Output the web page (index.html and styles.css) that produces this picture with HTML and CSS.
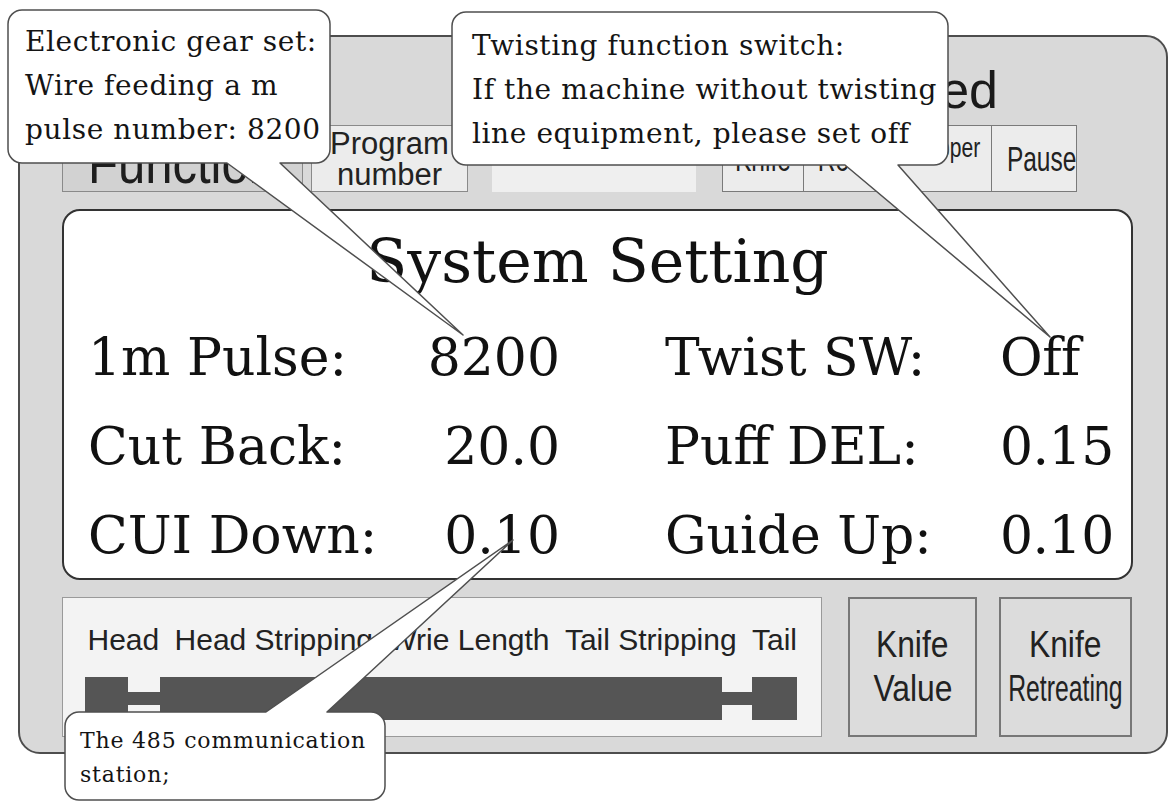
FILE: index.html
```html
<!DOCTYPE html>
<html lang="en">
<head>
<meta charset="utf-8">
<title>System Setting</title>
<link rel="stylesheet" href="styles.css">
</head>
<body>
<div class="stage">
  <div class="device">
    <div class="title-row"><span class="title">Advanced</span></div>
    <div class="toolbar">
      <div class="tb-func"><span class="func-text">Function</span></div>
      <div class="tb-prog"><span>Program</span><span>number</span></div>
      <div class="tb-blank"></div>
      <div class="tb-group">
        <div class="tb-btn"><span class="sq">Knife</span></div>
        <div class="tb-btn"><span class="sq">Reset</span></div>
        <div class="tb-btn tb-btn-top"><span class="sq sq-small">Stripper</span></div>
        <div class="tb-btn"><span class="sq">Pause</span></div>
      </div>
    </div>
    <div class="screen">
      <h1 class="screen-title">System Setting</h1>
      <div class="params">
        <span class="lbl">1m Pulse:</span><span class="val">8200</span><span class="lbl2">Twist SW:</span><span class="val2">Off</span>
        <span class="lbl">Cut Back:</span><span class="val">20.0</span><span class="lbl2">Puff DEL:</span><span class="val2">0.15</span>
        <span class="lbl">CUI Down:</span><span class="val">0.10</span><span class="lbl2">Guide Up:</span><span class="val2">0.10</span>
      </div>
    </div>
    <div class="bottom">
      <div class="wire">
        <div class="wire-labels"><span>Head</span><span>Head Stripping</span><span>Wrie Length</span><span>Tail Stripping</span><span>Tail</span></div>
        <div class="wire-bar">
          <div class="seg-end"></div>
          <div class="seg-neck"></div>
          <div class="seg-core"></div>
          <div class="seg-neck seg-neck-tail"></div>
          <div class="seg-end seg-end-tail"></div>
        </div>
      </div>
      <div class="knife"><span class="kl">Knife</span><span class="kl">Value</span></div>
      <div class="knife knife-ret"><span class="kl">Knife</span><span class="kl kl-tight">Retreating</span></div>
    </div>
  </div>

  <svg class="callout-shapes" width="1176" height="804" viewBox="0 0 1176 804" aria-hidden="true">
    <path d="M22,10 H316 A14,14 0 0 1 330,24 V149 A14,14 0 0 1 316,163 H280 L463,335 L227,163 H22 A14,14 0 0 1 8,149 V24 A14,14 0 0 1 22,10 Z"/>
    <path d="M466,12 H934 A14,14 0 0 1 948,26 V151 A14,14 0 0 1 934,165 H898 L1050,337 L845,165 H466 A14,14 0 0 1 452,151 V26 A14,14 0 0 1 466,12 Z"/>
    <path d="M79,712 H266 L513,540 L327,712 H371 A14,14 0 0 1 385,726 V786 A14,14 0 0 1 371,800 H79 A14,14 0 0 1 65,786 V726 A14,14 0 0 1 79,712 Z"/>
  </svg>
  <div class="callout c1">Electronic gear set:<br>Wire feeding a m<br>pulse number: 8200</div>
  <div class="callout c2">Twisting function switch:<br>If the machine without twisting<br>line equipment, please set off</div>
  <div class="callout c3">The 485 communication<br>station;</div>
</div>
</body>
</html>
```
FILE: styles.css
```css
body {
  margin: 0;
  background: #ffffff;
}

.stage {
  position: relative;
  width: 1176px;
  height: 804px;
  overflow: hidden;
  box-sizing: border-box;
  padding: 35px 0 0 18px;
  background: #ffffff;
}

.device {
  width: 1150px;
  height: 719px;
  box-sizing: border-box;
  border: 2px solid #4d4d4d;
  border-radius: 22px;
  background: #d9d9d9;
  padding: 0 33px 0 42px;
  display: flex;
  flex-direction: column;
}

/* title row */
.title-row {
  height: 88px;
  flex: none;
  box-sizing: border-box;
  padding: 18px 135px 0 0;
  display: flex;
  justify-content: flex-end;
  font: 52px/70px "Liberation Sans", Arial, sans-serif;
  color: #1a1a1a;
}

/* toolbar row */
.toolbar {
  height: 67px;
  flex: none;
  display: flex;
}

.tb-func {
  width: 241px;
  box-sizing: border-box;
  border: 1.5px solid #8a8a8a;
  background: #d2d2d2;
  overflow: hidden;
  padding-left: 25px;
  font: 57px/74px "Liberation Sans", Arial, sans-serif;
  white-space: nowrap;
  color: #1e1e1e;
}

.func-text {
  display: inline-block;
  transform: scaleX(0.86);
  transform-origin: left center;
}

.tb-prog {
  margin-left: 8px;
  width: 157px;
  box-sizing: border-box;
  border: 1.5px solid #8a8a8a;
  background: #ececec;
  display: flex;
  flex-direction: column;
  justify-content: center;
  align-items: center;
  font: 31px/31px "Liberation Sans", Arial, sans-serif;
  color: #222;
}

.tb-blank {
  margin-left: 24px;
  width: 204px;
  background: #efefef;
}

.tb-group {
  margin-left: 26px;
  width: 355px;
  box-sizing: border-box;
  border: 1.5px solid #7a7a7a;
  background: #ececec;
  display: flex;
}

.tb-btn {
  flex: 1;
  display: flex;
  align-items: center;
  justify-content: center;
  border-left: 1.5px solid #7a7a7a;
  font: 35px/35px "Liberation Sans", Arial, sans-serif;
  color: #222;
  white-space: nowrap;
}

.tb-btn:first-child {
  border-left: 0;
}

.tb-btn-top {
  align-items: flex-start;
  padding-top: 9px;
}

.sq {
  display: inline-block;
  transform: scaleX(0.7);
}

.sq-small {
  font-size: 27px;
  line-height: 27px;
  transform: scaleX(0.78);
}

/* main screen */
.screen {
  margin-top: 17px;
  height: 371px;
  flex: none;
  box-sizing: border-box;
  border: 2px solid #333;
  border-radius: 18px;
  background: #ffffff;
  padding-top: 15px;
  color: #111;
}

.screen-title {
  margin: 0;
  font: normal 60px/70px "DejaVu Serif", "Liberation Serif", serif;
  text-align: center;
}

.params {
  margin-top: 16.5px;
  padding-left: 24px;
  display: grid;
  grid-template-columns: 312px 160px 440px 1fr;
  grid-auto-rows: 89px;
  font: 52px/89px "DejaVu Serif", "Liberation Serif", serif;
  white-space: nowrap;
}

.val {
  text-align: right;
}

.lbl2 {
  padding-left: 105px;
}

.val2 {
  letter-spacing: -0.5px;
}

/* bottom row */
.bottom {
  margin-top: 17px;
  height: 140px;
  flex: none;
  display: flex;
}

.wire {
  width: 760px;
  box-sizing: border-box;
  border: 1.5px solid #9a9a9a;
  background: #f3f3f3;
  padding: 24.5px 24px 0 21.5px;
}

.wire-labels {
  margin-left: 3px;
  display: flex;
  justify-content: space-between;
  font: 30px/34px "Liberation Sans", Arial, sans-serif;
  color: #222;
  white-space: nowrap;
}

.wire-bar {
  margin-top: 20px;
  height: 43px;
  display: flex;
  align-items: center;
}

.seg-end {
  width: 43px;
  height: 43px;
  background: #555;
}

.seg-end-tail {
  width: 45px;
}

.seg-neck {
  width: 32px;
  height: 13px;
  background: #555;
}

.seg-neck-tail {
  width: 30px;
}

.seg-core {
  width: 562px;
  height: 43px;
  background: #555;
}

.knife {
  margin-left: 26px;
  width: 129px;
  box-sizing: border-box;
  border: 2px solid #777;
  background: #dcdcdc;
  display: flex;
  flex-direction: column;
  align-items: center;
  justify-content: center;
  font: 37px/44px "Liberation Sans", Arial, sans-serif;
  color: #222;
  white-space: nowrap;
}

.knife-ret {
  margin-left: 22px;
  width: 133px;
}

.kl {
  display: inline-block;
  transform: scaleX(0.86);
}

.kl-tight {
  transform: scaleX(0.67);
}

/* callouts */
.callout-shapes {
  position: absolute;
  left: 0;
  top: 0;
  fill: #ffffff;
  stroke: #4f4f4f;
  stroke-width: 1.5;
  stroke-linejoin: round;
}

.callout {
  position: absolute;
  font-family: "DejaVu Serif", "Liberation Serif", serif;
  color: #141414;
  white-space: nowrap;
}

.c1 {
  left: 8px;
  top: 10px;
  padding: 10px 0 0 17px;
  font-size: 28px;
  line-height: 44px;
  letter-spacing: 0.6px;
}

.c2 {
  left: 452px;
  top: 12px;
  padding: 12px 0 0 20px;
  font-size: 28px;
  line-height: 44px;
  letter-spacing: 0.6px;
}

.c3 {
  left: 65px;
  top: 712px;
  padding: 12px 0 0 15px;
  font-size: 22px;
  line-height: 34px;
  letter-spacing: 0.8px;
}
```
